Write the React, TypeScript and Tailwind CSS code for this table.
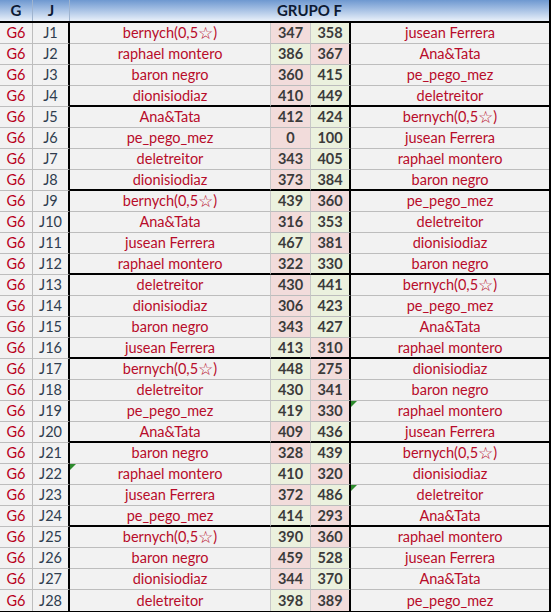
import React from 'react';

type Match = { j: string; a: string; sa: number; sb: number; b: string; markA?: boolean; markB?: boolean };

const BERNYCH = 'bernych(0,5☆ )';

const matches: Match[] = [
  { j: 'J1', a: BERNYCH, sa: 347, sb: 358, b: 'jusean Ferrera' },
  { j: 'J2', a: 'raphael montero', sa: 386, sb: 367, b: 'Ana&Tata' },
  { j: 'J3', a: 'baron negro', sa: 360, sb: 415, b: 'pe_pego_mez' },
  { j: 'J4', a: 'dionisiodiaz', sa: 410, sb: 449, b: 'deletreitor' },
  { j: 'J5', a: 'Ana&Tata', sa: 412, sb: 424, b: BERNYCH },
  { j: 'J6', a: 'pe_pego_mez', sa: 0, sb: 100, b: 'jusean Ferrera' },
  { j: 'J7', a: 'deletreitor', sa: 343, sb: 405, b: 'raphael montero' },
  { j: 'J8', a: 'dionisiodiaz', sa: 373, sb: 384, b: 'baron negro' },
  { j: 'J9', a: BERNYCH, sa: 439, sb: 360, b: 'pe_pego_mez' },
  { j: 'J10', a: 'Ana&Tata', sa: 316, sb: 353, b: 'deletreitor' },
  { j: 'J11', a: 'jusean Ferrera', sa: 467, sb: 381, b: 'dionisiodiaz' },
  { j: 'J12', a: 'raphael montero', sa: 322, sb: 330, b: 'baron negro' },
  { j: 'J13', a: 'deletreitor', sa: 430, sb: 441, b: BERNYCH },
  { j: 'J14', a: 'dionisiodiaz', sa: 306, sb: 423, b: 'pe_pego_mez' },
  { j: 'J15', a: 'baron negro', sa: 343, sb: 427, b: 'Ana&Tata' },
  { j: 'J16', a: 'jusean Ferrera', sa: 413, sb: 310, b: 'raphael montero' },
  { j: 'J17', a: BERNYCH, sa: 448, sb: 275, b: 'dionisiodiaz' },
  { j: 'J18', a: 'deletreitor', sa: 430, sb: 341, b: 'baron negro' },
  { j: 'J19', a: 'pe_pego_mez', sa: 419, sb: 330, b: 'raphael montero', markB: true },
  { j: 'J20', a: 'Ana&Tata', sa: 409, sb: 436, b: 'jusean Ferrera' },
  { j: 'J21', a: 'baron negro', sa: 328, sb: 439, b: BERNYCH },
  { j: 'J22', a: 'raphael montero', sa: 410, sb: 320, b: 'dionisiodiaz', markA: true },
  { j: 'J23', a: 'jusean Ferrera', sa: 372, sb: 486, b: 'deletreitor', markB: true },
  { j: 'J24', a: 'pe_pego_mez', sa: 414, sb: 293, b: 'Ana&Tata' },
  { j: 'J25', a: BERNYCH, sa: 390, sb: 360, b: 'raphael montero' },
  { j: 'J26', a: 'baron negro', sa: 459, sb: 528, b: 'jusean Ferrera' },
  { j: 'J27', a: 'dionisiodiaz', sa: 344, sb: 370, b: 'Ana&Tata' },
  { j: 'J28', a: 'deletreitor', sa: 398, sb: 389, b: 'pe_pego_mez' },
];

// esquina verde de Excel (indicador de error)
function Mark() {
  return <span className="absolute left-0 top-0 h-0 w-0 border-l-[6px] border-b-[6px] border-l-[#2e8b2e] border-b-transparent" />;
}

function Name({ text }: { text: string }) {
  const i = text.indexOf('☆');
  if (i < 0) return <>{text}</>;
  return (
    <>
      {text.slice(0, i)}
      <span className="text-[17px] leading-none" style={{ fontFamily: '"DejaVu Sans", sans-serif' }}>☆</span>
      {text.slice(i + 1)}
    </>
  );
}

export default function App() {
  return (
    <div className="w-[552px] h-[612px] bg-white text-[14.5px] leading-none" style={{ fontFamily: 'Lato, "Open Sans", sans-serif' }}>
      <div className="w-[551px] border-r-2 border-b-2 border-black">
        {/* cabecera */}
        <div className="flex h-[23px] border-b-2 border-black bg-gradient-to-b from-[#6e98d0] to-[#e9f0f9] text-[15px] font-bold text-[#0d1a33]">
          <div className="flex w-[33px] items-center justify-center border-r border-[#9fb4cf]">G</div>
          <div className="flex w-[37px] items-center justify-center border-r border-[#9fb4cf]">J</div>
          <div className="flex flex-1 items-center justify-center">GRUPO F</div>
        </div>

        {matches.map((m, i) => {
          const last = i === matches.length - 1;
          const groupEnd = (i + 1) % 4 === 0 && !last;
          const line = groupEnd ? 'border-b-2 border-b-black' : last ? '' : 'border-b border-b-[#bdbdbd]';
          const gline = last ? '' : 'border-b border-b-[#bdbdbd]';
          const aWins = m.sa > m.sb;
          return (
            <div key={m.j} className="flex h-[21px]">
              <div className={`flex w-[33px] items-center justify-center border-r border-r-[#bdbdbd] bg-[#f2f2f2] pt-px text-[#b8001c] ${gline}`}>G6</div>
              <div className={`flex w-[37px] items-center justify-center border-r-2 border-r-black bg-[#f2f2f2] pt-px text-[#2f3d4f] ${gline}`}>{m.j}</div>
              <div className={`relative flex w-[201px] items-center justify-center border-r border-r-[#c8c8c8] bg-[#f2f2f2] pt-px text-[#b80c2a] ${line}`}>
                {m.markA && <Mark />}
                <Name text={m.a} />
              </div>
              <div className={`flex w-[40px] items-center justify-center border-r border-r-[#c8c8c8] pt-px font-bold text-[#3b3b3b] ${aWins ? 'bg-[#ebf1de]' : 'bg-[#f2dcdb]'} ${line}`}>{m.sa}</div>
              <div className={`flex w-[40px] items-center justify-center border-r-2 border-r-black pt-px font-bold text-[#3b3b3b] ${aWins ? 'bg-[#f2dcdb]' : 'bg-[#ebf1de]'} ${line}`}>{m.sb}</div>
              <div className={`relative flex flex-1 items-center justify-center bg-[#f2f2f2] pt-px text-[#b80c2a] ${line}`}>
                {m.markB && <Mark />}
                <Name text={m.b} />
              </div>
            </div>
          );
        })}
      </div>
    </div>
  );
}
